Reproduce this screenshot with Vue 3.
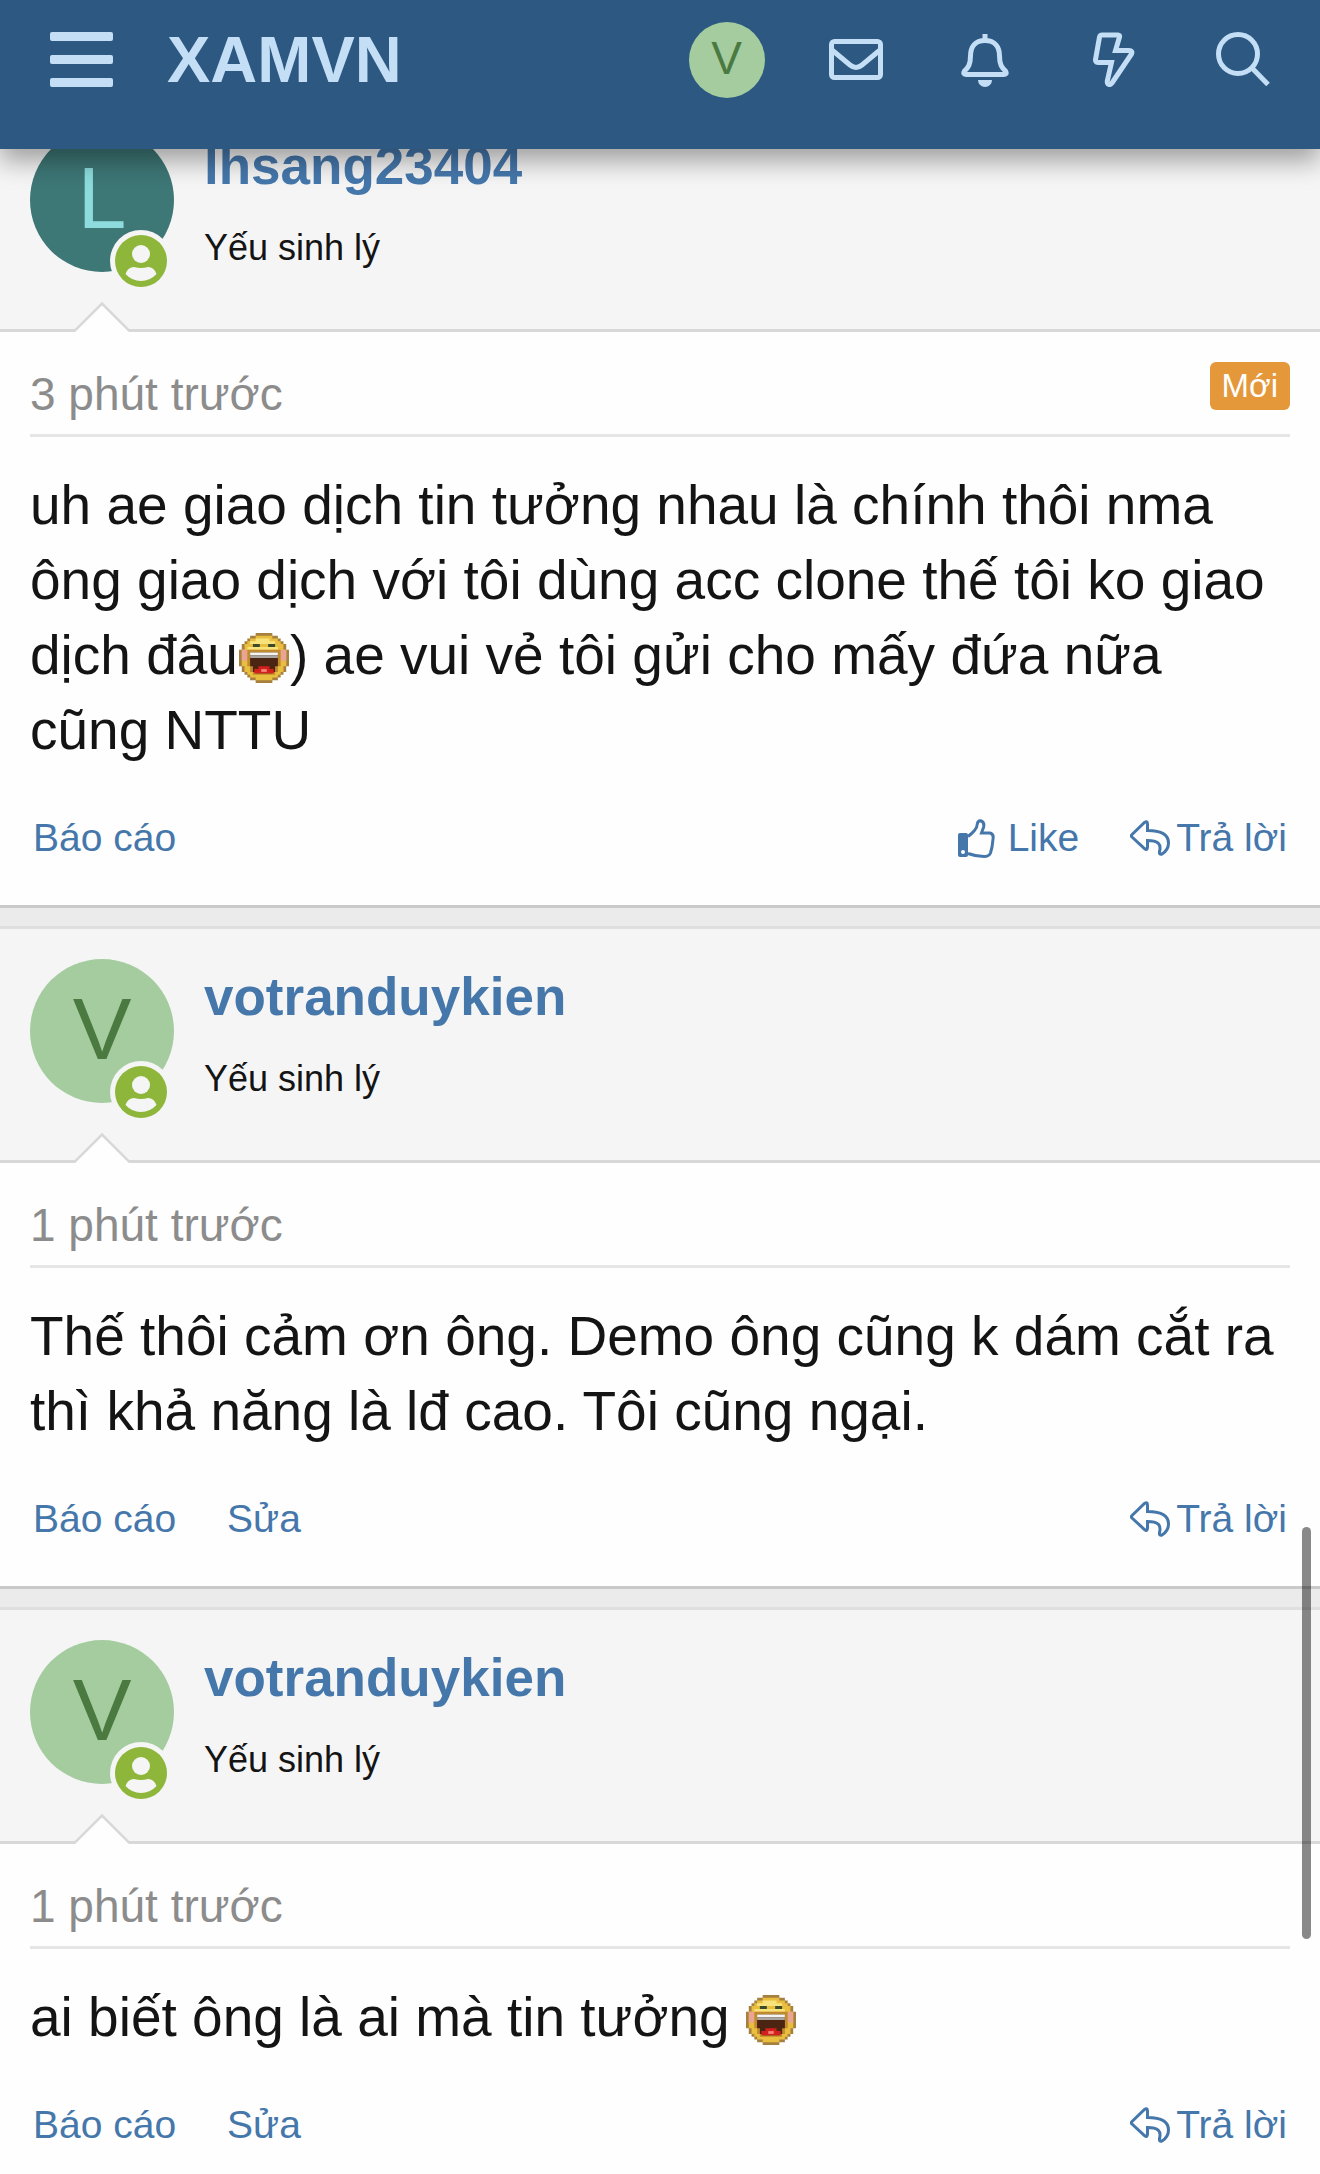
<script setup>
const posts = [
  {
    id: 1,
    user: 'lhsang23404',
    initial: 'L',
    tone: 'teal',
    time: '3 phút trước',
    isNew: true,
    canEdit: false,
    canLike: true,
    parts: [
      'uh ae giao dịch tin tưởng nhau là chính thôi nma ông giao dịch với tôi dùng acc clone thế tôi ko giao dịch đâu',
      ') ae vui vẻ tôi gửi cho mấy đứa nữa cũng NTTU',
    ],
  },
  {
    id: 2,
    user: 'votranduykien',
    initial: 'V',
    tone: 'green',
    time: '1 phút trước',
    isNew: false,
    canEdit: true,
    canLike: false,
    parts: ['Thế thôi cảm ơn ông. Demo ông cũng k dám cắt ra thì khả năng là lđ cao. Tôi cũng ngại.'],
  },
  {
    id: 3,
    user: 'votranduykien',
    initial: 'V',
    tone: 'green',
    time: '1 phút trước',
    isNew: false,
    canEdit: true,
    canLike: false,
    parts: ['ai biết ông là ai mà tin tưởng ', ''],
  },
]
</script>

<template>
  <div class="page">
    <header class="nav">
      <button class="menu" type="button" aria-label="Menu">
        <span></span><span></span><span></span>
      </button>
      <a class="brand" href="#">XAMVN</a>
      <nav class="tools">
        <a href="#" aria-label="Tài khoản"><span class="avatar green small">V</span></a>
        <a href="#" aria-label="Hộp thư">
          <svg width="54" height="41" viewBox="0 0 54 41">
            <rect x="2.5" y="2.5" width="49" height="36" rx="3" />
            <path d="M3 11 L21 26 Q27 31 33 26 L51 11" />
          </svg>
        </a>
        <a href="#" aria-label="Thông báo">
          <svg width="48" height="55" viewBox="0 0 48 55">
            <path d="M24 8.500C14 8.500 9.500 15 9.500 24C9.500 33 7 35.500 3.500 39Q1.500 42.500 5 42.500H43Q46.500 42.500 44.500 39C41 35.500 38.500 33 38.500 24C38.500 15 34 8.500 24 8.500ZM24 2V8" />
            <path class="solid" d="M17 48H31A7 7 0 0 1 17 48Z" />
          </svg>
        </a>
        <a href="#" aria-label="Mới nhất">
          <svg width="42" height="55" viewBox="0 0 42 55">
            <path d="M9 3H25Q27 3 26.500 5L22.500 18.500H36Q40 18.500 38.500 22L19 51Q17 53.500 15 52Q14 51 14.300 49L18.500 30.500H5Q2 30.500 2.600 27L6.500 5Q7 3 9 3Z" />
          </svg>
        </a>
        <a href="#" aria-label="Tìm kiếm">
          <svg width="54" height="55" viewBox="0 0 54 55">
            <circle cx="22" cy="22" r="19.500" />
            <path d="M36 36L52 52.500" />
          </svg>
        </a>
      </nav>
    </header>

    <main class="thread">
      <article v-for="post in posts" :key="post.id" class="post">
        <div class="user">
          <div class="portrait">
            <span class="avatar" :class="post.tone">{{ post.initial }}</span>
            <svg class="online" width="62" height="62" viewBox="0 0 62 62">
              <circle cx="31" cy="31" r="31" fill="#f5f5f5" />
              <circle cx="31" cy="31" r="26" fill="#8db63a" />
              <circle cx="31" cy="24" r="9" fill="#f5f5f5" />
              <path d="M15.500 44Q18 37 24 37Q31 39 38 37Q44 37 46.500 44Q40 51 31 51Q22 51 15.500 44Z" fill="#f5f5f5" />
            </svg>
          </div>
          <div class="identity">
            <a class="name" href="#">{{ post.user }}</a>
            <span class="rank">Yếu sinh lý</span>
          </div>
          <svg class="notch" width="56" height="30" viewBox="0 0 56 30">
            <path d="M0 30L28 1L56 30Z" fill="#fefefe" />
            <path d="M0 29.500L28 1.500L56 29.500" fill="none" stroke="#d8d8d8" stroke-width="2.500" />
          </svg>
        </div>

        <div class="content">
          <div class="meta">
            <time>{{ post.time }}</time>
            <span v-if="post.isNew" class="new">Mới</span>
          </div>
          <p class="text">
            <template v-for="(part, i) in post.parts" :key="i"><svg v-if="i" class="smiley" width="50" height="50" viewBox="0 0 18 18" role="img" aria-label="cười lớn">
                <path fill="#a5803f" d="M6 0H12V1H14V2H15V3H16V4H17V6H18V12H17V14H16V15H15V16H14V17H12V18H6V17H4V16H3V15H2V14H1V12H0V6H1V4H2V3H3V2H4V1H6Z" />
                <path fill="#e9bd3d" d="M6 1H12V2H14V3H15V4H16V6H17V12H16V14H15V15H14V16H12V17H6V16H4V15H3V14H2V12H1V6H2V4H3V3H4V2H6Z" />
                <path fill="#f8e27c" d="M6 2H11V3H13V4H4V3H6ZM3 5H14V6H3Z" />
                <path fill="#eba394" d="M1 6H3V10H1ZM15 6H17V10H15Z" />
                <path fill="#3c4a2c" d="M5 4H7.500V5H5ZM10.500 4H13V5H10.500Z" />
                <path fill="#c08a2e" d="M3 6H15V12H14V14H13V15H5V14H4V12H3Z" />
                <path fill="#4c2412" d="M4 7H14V12H13V14H12V14.500H6V14H5V12H4Z" />
                <path fill="#f4f4f2" d="M4 7H14V8H4Z" />
                <path fill="#a9a5a1" d="M4 8H14V9H4Z" />
                <path fill="#d3201c" d="M7 12H11V13H12.500V14.500H5.500V13H7Z" />
                <path fill="#f4837a" d="M8 13H10V14H8Z" />
              </svg>{{ part }}</template>
          </p>
          <footer class="actions">
            <a href="#">Báo cáo</a>
            <a v-if="post.canEdit" href="#">Sửa</a>
            <span class="spacer"></span>
            <a v-if="post.canLike" class="like" href="#">
              <svg width="38" height="39" viewBox="0 0 38 39">
                <path fill="currentColor" stroke="none" fill-rule="evenodd" d="M2 14H8Q10 14 10 16V36Q10 38 8 38H2Q0 38 0 36V16Q0 14 2 14ZM5 31A2 2 0 1 0 5 35A2 2 0 1 0 5 31Z" />
                <path d="M10 17.500Q14 14.500 16.500 11.500Q19 9 19.300 5Q19.800 1.500 22.500 1.700Q27 3 25.500 8.500Q24.500 11 23.500 14H32Q36 15 35 20Q34.500 28 32.500 34Q31 37.500 26 37.500Q18 37.500 10 34.500" />
              </svg>Like</a>
            <a class="reply" href="#">
              <svg width="40" height="36" viewBox="0 0 40 36">
                <path d="M2 14.500L14.500 2.500Q17.500 .5 17.500 4V10.500C31 10.500 38.500 14 38.500 23C38.500 28 36 31.500 32 34Q29 35 29.500 31.500C31.500 24 28 20.500 17.500 20.500V27Q17.500 31 14.500 28.500L2 17Q.8 15.700 2 14.500Z" />
              </svg>Trả lời</a>
          </footer>
        </div>
      </article>
    </main>
    <div class="scroll-thumb"></div>
  </div>
</template>

<style>
body {
  background: #fefefe;
}
</style>

<style scoped>
.page {
  position: relative;
  font-family: "Liberation Sans", Arial, sans-serif;
  color: #141414;
}
a {
  color: #4577ab;
  text-decoration: none;
}
.nav {
  position: sticky;
  top: 0;
  z-index: 2;
  display: flex;
  align-items: center;
  box-sizing: border-box;
  height: 149px;
  padding: 0 13px 30px 50px;
  background: #2c5882;
  box-shadow: 0 12px 24px rgba(0, 0, 0, 0.35);
}
.menu {
  display: flex;
  flex-direction: column;
  gap: 14px;
  width: 63px;
  padding: 0;
  border: 0;
  background: none;
}
.menu span {
  height: 9px;
  border-radius: 2px;
  background: #c3def5;
}
.brand {
  margin-left: 54px;
  font-size: 65px;
  line-height: 76px;
  font-weight: 700;
  color: #c3def5;
}
.tools {
  display: flex;
  margin-left: auto;
}
.tools a {
  display: flex;
  align-items: center;
  justify-content: center;
  width: 129px;
  height: 76px;
}
.tools svg {
  fill: none;
  stroke: #c3def5;
  stroke-width: 5;
}
.tools .solid {
  fill: #c3def5;
  stroke: none;
}
.avatar {
  display: block;
  width: 144px;
  height: 144px;
  border-radius: 50%;
  font-size: 88px;
  line-height: 140px;
  text-align: center;
}
.avatar.small {
  width: 76px;
  height: 76px;
  font-size: 46px;
  line-height: 72px;
}
.green {
  background: #a4cc9f;
  color: #4b7a41;
}
.teal {
  background: #3d7776;
  color: #8ddbdd;
}
.thread {
  display: flex;
  flex-direction: column;
  gap: 18px;
  margin-top: -54px;
  background: #ebebeb;
}
.post {
  border-top: 3px solid #dfdfdf;
  border-bottom: 3px solid #c9c9c9;
}
.user {
  position: relative;
  display: flex;
  gap: 30px;
  height: 201px;
  padding: 30px 30px 0;
  background: #f5f5f5;
  border-bottom: 3px solid #d8d8d8;
}
.portrait {
  position: relative;
  width: 144px;
  height: 144px;
}
.online {
  position: absolute;
  left: 80px;
  top: 102px;
}
.notch {
  position: absolute;
  left: 74px;
  bottom: -3px;
}
.identity {
  display: flex;
  flex-direction: column;
  gap: 19px;
}
.name {
  font-size: 53px;
  line-height: 76px;
  font-weight: 700;
}
.rank {
  font-size: 36px;
  line-height: 50px;
}
.content {
  padding: 30px 30px 40px;
  background: #fefefe;
}
.post:last-child {
  border-bottom: 0;
}
.post:last-child .content {
  padding-bottom: 20px;
}
.meta {
  display: flex;
  align-items: flex-start;
  justify-content: space-between;
  height: 72px;
  border-bottom: 3px solid #e6e6e6;
}
.meta time {
  font-size: 46px;
  line-height: 64px;
  color: #8c8c8c;
}
.new {
  padding: 0 12px;
  border-radius: 6px;
  background: #e5983a;
  color: #fefefe;
  font-size: 33px;
  line-height: 48px;
}
.text {
  margin: 31px 0 43px;
  padding-right: 10px;
  font-size: 55px;
  line-height: 75px;
}
.smiley {
  margin: 0 1px;
  vertical-align: -9px;
}
.actions {
  display: flex;
  gap: 51px;
  padding: 0 3px;
  font-size: 39px;
  line-height: 54px;
}
.actions a {
  display: flex;
  align-items: center;
}
.actions svg {
  fill: none;
  stroke: currentColor;
  stroke-width: 3;
}
.spacer {
  flex: 1;
}
.like {
  gap: 12px;
}
.reply {
  gap: 6px;
}
.scroll-thumb {
  position: fixed;
  right: 9px;
  top: 1527px;
  z-index: 3;
  width: 9px;
  height: 412px;
  border-radius: 5px;
  background: rgba(0, 0, 0, 0.46);
}
</style>
